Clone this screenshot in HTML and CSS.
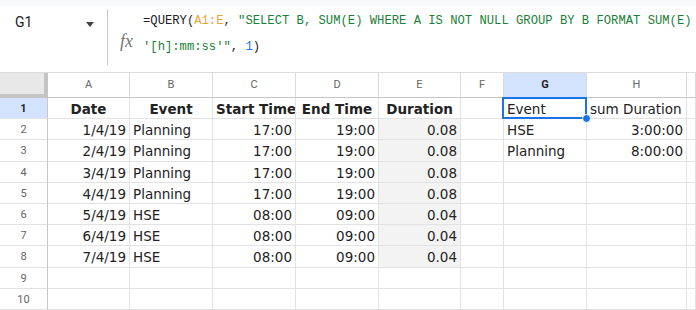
FILE: index.html
```html
<!DOCTYPE html>
<html lang="en">
<head>
   <meta charset="UTF-8">
   <title>Sheet - Query</title>
   <link rel="stylesheet" href="styles.css">
</head>
<body>

   <!-- Formula bar -->
   <div class="formula-bar">
       <div class="name-box">
           <span>G1</span>
           <svg class="caret" width="8" height="5" viewBox="0 0 8 5"><path d="M0 0h8L4 5z" fill="#444"/></svg>
       </div>
       <div class="fx">fx</div>
       <div class="formula">
           <div>=QUERY(<span class="ref">A1:E</span>, <span class="str">"SELECT B, SUM(E) WHERE A IS NOT NULL GROUP BY B FORMAT SUM(E)</span></div>
           <div><span class="str">'[h]:mm:ss'"</span>, <span class="num">1</span>)</div>
       </div>
   </div>

   <!-- Grid -->
   <div class="sheet">
       <div class="row col-head">
           <div class="corner"></div>
           <div class="ch">A</div><div class="ch">B</div><div class="ch">C</div><div class="ch">D</div>
           <div class="ch">E</div><div class="ch">F</div><div class="ch sel">G</div><div class="ch">H</div><div class="ch"></div>
       </div>
       <div class="row">
           <div class="rh sel">1</div>
           <div class="c b center">Date</div><div class="c b center">Event</div><div class="c b center">Start Time</div>
           <div class="c b center">End Time</div><div class="c b center">Duration</div><div class="c"></div>
           <div class="c active">Event</div><div class="c">sum Duration</div><div class="c"></div>
       </div>
       <div class="row">
           <div class="rh">2</div>
           <div class="c r">1/4/19</div><div class="c">Planning</div><div class="c r">17:00</div>
           <div class="c r">19:00</div><div class="c r dur">0.08</div><div class="c"></div>
           <div class="c">HSE</div><div class="c r">3:00:00</div><div class="c"></div>
       </div>
       <div class="row">
           <div class="rh">3</div>
           <div class="c r">2/4/19</div><div class="c">Planning</div><div class="c r">17:00</div>
           <div class="c r">19:00</div><div class="c r dur">0.08</div><div class="c"></div>
           <div class="c">Planning</div><div class="c r">8:00:00</div><div class="c"></div>
       </div>
       <div class="row">
           <div class="rh">4</div>
           <div class="c r">3/4/19</div><div class="c">Planning</div><div class="c r">17:00</div>
           <div class="c r">19:00</div><div class="c r dur">0.08</div><div class="c"></div>
           <div class="c"></div><div class="c"></div><div class="c"></div>
       </div>
       <div class="row">
           <div class="rh">5</div>
           <div class="c r">4/4/19</div><div class="c">Planning</div><div class="c r">17:00</div>
           <div class="c r">19:00</div><div class="c r dur">0.08</div><div class="c"></div>
           <div class="c"></div><div class="c"></div><div class="c"></div>
       </div>
       <div class="row">
           <div class="rh">6</div>
           <div class="c r">5/4/19</div><div class="c">HSE</div><div class="c r">08:00</div>
           <div class="c r">09:00</div><div class="c r dur">0.04</div><div class="c"></div>
           <div class="c"></div><div class="c"></div><div class="c"></div>
       </div>
       <div class="row">
           <div class="rh">7</div>
           <div class="c r">6/4/19</div><div class="c">HSE</div><div class="c r">08:00</div>
           <div class="c r">09:00</div><div class="c r dur">0.04</div><div class="c"></div>
           <div class="c"></div><div class="c"></div><div class="c"></div>
       </div>
       <div class="row">
           <div class="rh">8</div>
           <div class="c r">7/4/19</div><div class="c">HSE</div><div class="c r">08:00</div>
           <div class="c r">09:00</div><div class="c r dur">0.04</div><div class="c"></div>
           <div class="c"></div><div class="c"></div><div class="c"></div>
       </div>
       <div class="row">
           <div class="rh">9</div>
           <div class="c"></div><div class="c"></div><div class="c"></div><div class="c"></div><div class="c"></div>
           <div class="c"></div><div class="c"></div><div class="c"></div><div class="c"></div>
       </div>
       <div class="row">
           <div class="rh">10</div>
           <div class="c"></div><div class="c"></div><div class="c"></div><div class="c"></div><div class="c"></div>
           <div class="c"></div><div class="c"></div><div class="c"></div><div class="c"></div>
       </div>
   </div>

</body>
</html>
```

FILE: styles.css
```css
body {
    margin: 0;
    background: #fff;
    font-family: "DejaVu Sans", Verdana, sans-serif;
    color: #222;
    overflow: hidden;
}

/* formula bar */
.formula-bar {
    display: flex;
    height: 73px;
    box-sizing: border-box;
    border-top: 6px solid #f8f9fa;
    border-bottom: 1px solid #dadce0;
}
.name-box {
    width: 108px;
    height: 56px;
    margin-top: 3px;
    box-sizing: border-box;
    padding: 5px 13px 0 15px;
    border-right: 1px solid #c7c7c7;
    display: flex;
    justify-content: space-between;
    font-family: Roboto, Arial, sans-serif;
    font-size: 14px;
    color: #202124;
}
.caret {
    margin-top: 8px;
}
.fx {
    width: 35px;
    padding: 25px 0 0 12px;
    box-sizing: border-box;
    font-family: "Liberation Serif", serif;
    font-style: italic;
    font-size: 18px;
    color: #757575;
}
.formula {
    padding-top: 2px;
    font-family: "Liberation Mono", monospace;
    font-size: 12.2px;
    line-height: 26px;
    color: #202124;
    white-space: nowrap;
}
.ref { color: #e8a33d; }
.str { color: #188038; }
.num { color: #1a73e8; }

/* grid */
.row {
    display: grid;
    grid-template-columns: 48px 82px 83px 83px 83px 82px 43px 83px 100px 1fr;
    height: 21.2px;
}
.row > div {
    box-sizing: border-box;
    border-right: 1px solid #e2e2e2;
    border-bottom: 1px solid #e2e2e2;
    overflow: hidden;
    white-space: nowrap;
}
.col-head {
    height: 25px;
}
.col-head > div {
    border-bottom-color: #c7c7c7;
    border-right-color: #dadada;
}
.corner {
    background: #e8e8e8;
    border-right: 4px solid #c4c4c4 !important;
    border-bottom: 4px solid #c4c4c4 !important;
}
.ch {
    text-align: center;
    font-family: Roboto, Arial, sans-serif;
    font-size: 11px;
    line-height: 24px;
    color: #666;
}
.rh {
    text-align: center;
    font-family: Roboto, Arial, sans-serif;
    font-size: 11px;
    line-height: 21px;
    color: #666;
    border-right-color: #c7c7c7 !important;
}
.sel {
    background: #d3e3fd;
    font-weight: bold;
    color: #1f1f1f;
}
.c {
    padding: 2px 3px 0 3px;
    font-size: 13.5px;
    line-height: 18px;
}
.b {
    font-weight: bold;
}
.center {
    text-align: center;
}
.r {
    text-align: right;
}
.dur {
    background: #f3f3f3;
}
.active {
    position: relative;
    overflow: visible !important;
}
.active::after {
    content: "";
    position: absolute;
    left: -2px;
    top: -1px;
    right: -1px;
    bottom: -1px;
    border: 2px solid #1a73e8;
}
.active::before {
    content: "";
    position: absolute;
    right: -5px;
    bottom: -5px;
    width: 7px;
    height: 7px;
    border-radius: 50%;
    background: #1a73e8;
    border: 1px solid #fff;
    z-index: 1;
}
```
